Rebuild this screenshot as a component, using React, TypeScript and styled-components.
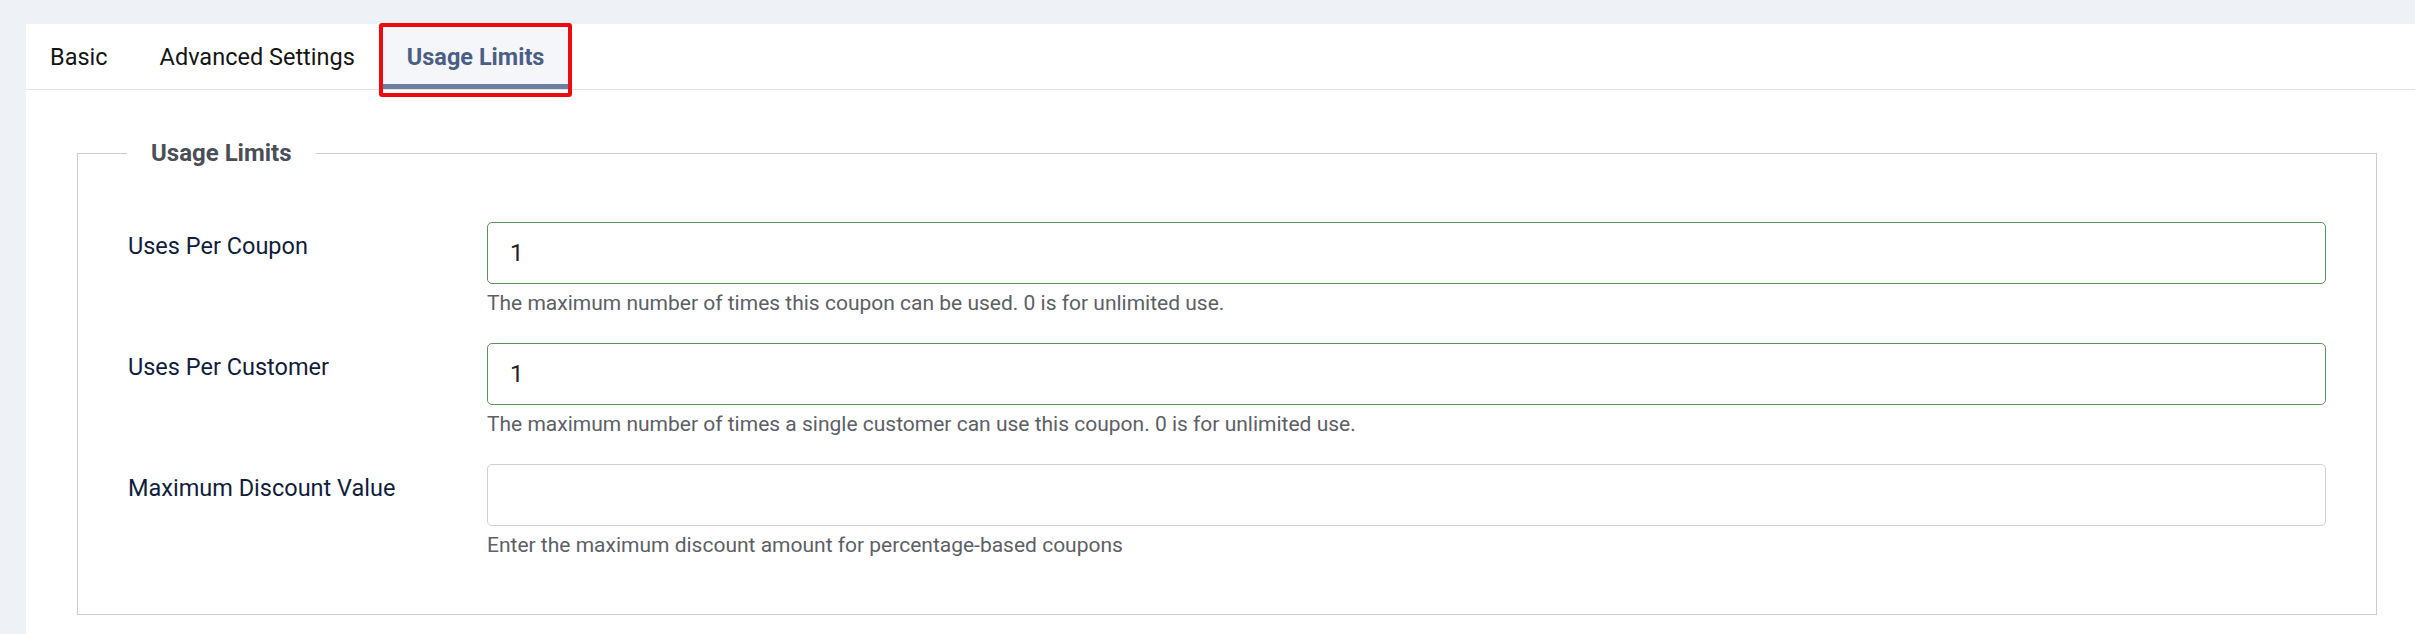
import React from "react";
import styled, { createGlobalStyle } from "styled-components";

const GlobalStyle = createGlobalStyle`
  html, body {
    margin: 0;
    padding: 0;
    background: #eef1f6;
    overflow: hidden;
  }
  * {
    box-sizing: border-box;
  }
  body {
    font-family: Roboto, "Noto Sans", "Liberation Sans", sans-serif;
  }
`;

const Page = styled.div`
  padding: 24px 0 0 26px;
  min-height: 634px;
`;

const Panel = styled.div`
  background: #ffffff;
  min-height: 610px;
  display: flex;
  flex-direction: column;
`;

const TabBar = styled.div`
  display: flex;
  align-items: stretch;
  gap: 4px;
  height: 66px;
  border-bottom: 1px solid #e2e5ea;
`;

interface TabProps {
  $active?: boolean;
}

const Tab = styled.div<TabProps>`
  position: relative;
  display: flex;
  align-items: center;
  padding: 5px 24px 0;
  font-size: 23.5px;
  font-weight: ${({ $active }) => ($active ? 700 : 400)};
  color: ${({ $active }) => ($active ? "#4b5f85" : "#151515")};
  background: ${({ $active }) => ($active ? "#f4f6fa" : "transparent")};
  border-bottom: 5px solid
    ${({ $active }) => ($active ? "#6a7ea3" : "transparent")};
  cursor: pointer;
`;

// red outline drawn around the selected tab
const Highlight = styled.span`
  position: absolute;
  left: -4px;
  right: -4px;
  top: -1px;
  bottom: -13px;
  border: 4px solid #ec0c10;
  border-radius: 3px;
  pointer-events: none;
`;

const Content = styled.div`
  padding: 45px 38px 0 51px;
`;

const Fieldset = styled.fieldset`
  margin: 0;
  border: 1px solid #c9ccd6;
  padding: 51px 50px 54px 50px;
  min-width: 0;
`;

const Legend = styled.legend`
  padding: 0 24px;
  margin-left: -1px;
  font-size: 24px;
  line-height: 36px;
  font-weight: 700;
  color: #4a4e57;
`;

const Rows = styled.div`
  display: flex;
  flex-direction: column;
  gap: 25px;
`;

const Row = styled.div`
  display: grid;
  grid-template-columns: 359px 1fr;
`;

const Label = styled.label`
  padding-top: 7px;
  font-size: 23.5px;
  line-height: 1.5;
  color: #111d3c;
`;

const Field = styled.div`
  display: flex;
  flex-direction: column;
`;

interface InputProps {
  $valid?: boolean;
}

const Input = styled.input<InputProps>`
  height: 62px;
  width: 100%;
  padding: 0 22px;
  border: 1px solid ${({ $valid }) => ($valid ? "#5b915c" : "#cdd0da")};
  border-radius: 5px;
  font-family: Roboto, "Noto Sans", "Liberation Sans", sans-serif;
  font-size: 24px;
  color: #222;
  background: #fff;
  outline: none;
`;

const Hint = styled.div`
  margin-top: 4px;
  font-size: 21px;
  line-height: 30px;
  color: #5c6066;
`;

const tabs = ["Basic", "Advanced Settings", "Usage Limits"];

const fields = [
  {
    id: "per-coupon",
    label: "Uses Per Coupon",
    value: "1",
    hint: "The maximum number of times this coupon can be used. 0 is for unlimited use.",
  },
  {
    id: "per-customer",
    label: "Uses Per Customer",
    value: "1",
    hint: "The maximum number of times a single customer can use this coupon. 0 is for unlimited use.",
  },
  {
    id: "max-discount",
    label: "Maximum Discount Value",
    value: "",
    hint: "Enter the maximum discount amount for percentage-based coupons",
  },
];

const App = () => {
  const active = "Usage Limits";

  return (
    <>
      <GlobalStyle />
      <Page>
        <Panel>
          <TabBar>
            {tabs.map((t) => (
              <Tab key={t} $active={t === active}>
                {t}
                {t === active && <Highlight />}
              </Tab>
            ))}
          </TabBar>
          <Content>
            <Fieldset>
              <Legend>Usage Limits</Legend>
              <Rows>
                {fields.map((f) => (
                  <Row key={f.id}>
                    <Label htmlFor={f.id}>{f.label}</Label>
                    <Field>
                      <Input
                        id={f.id}
                        type="text"
                        defaultValue={f.value}
                        $valid={f.value !== ""}
                      />
                      <Hint>{f.hint}</Hint>
                    </Field>
                  </Row>
                ))}
              </Rows>
            </Fieldset>
          </Content>
        </Panel>
      </Page>
    </>
  );
};

export default App;
